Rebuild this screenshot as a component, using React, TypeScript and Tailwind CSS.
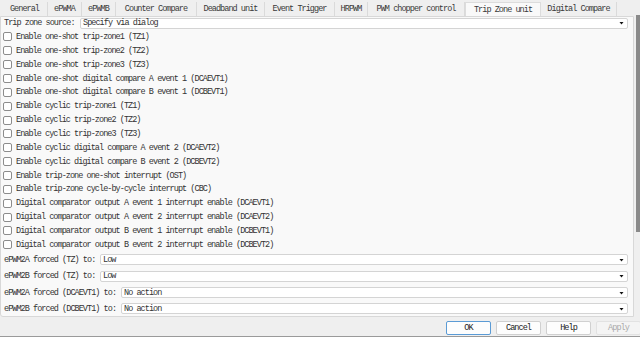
import React from "react";

const tabs: [string, number][] = [
  ["General", 46],
  ["ePWMA", 34],
  ["ePWMB", 34],
  ["Counter Compare", 81],
  ["Deadband unit", 68],
  ["Event Trigger", 70],
  ["HRPWM", 33],
  ["PWM chopper control", 97],
  ["Trip Zone unit", 76],
  ["Digital Compare", 76],
];

const checks = [
  "Enable one-shot trip-zone1 (TZ1)",
  "Enable one-shot trip-zone2 (TZ2)",
  "Enable one-shot trip-zone3 (TZ3)",
  "Enable one-shot digital compare A event 1 (DCAEVT1)",
  "Enable one-shot digital compare B event 1 (DCBEVT1)",
  "Enable cyclic trip-zone1 (TZ1)",
  "Enable cyclic trip-zone2 (TZ2)",
  "Enable cyclic trip-zone3 (TZ3)",
  "Enable cyclic digital compare A event 2 (DCAEVT2)",
  "Enable cyclic digital compare B event 2 (DCBEVT2)",
  "Enable trip-zone one-shot interrupt (OST)",
  "Enable trip-zone cycle-by-cycle interrupt (CBC)",
  "Digital comparator output A event 1 interrupt enable (DCAEVT1)",
  "Digital comparator output A event 2 interrupt enable (DCAEVT2)",
  "Digital comparator output B event 1 interrupt enable (DCBEVT1)",
  "Digital comparator output B event 2 interrupt enable (DCBEVT2)",
];

const selects: [string, string, number][] = [
  ["ePWM2A forced (TZ) to:", "Low", 100],
  ["ePWM2B forced (TZ) to:", "Low", 100],
  ["ePWM2A forced (DCAEVT1) to:", "No action", 121],
  ["ePWM2B forced (DCBEVT1) to:", "No action", 121],
];

function Arrow() {
  return (
    <svg width="5" height="4" viewBox="0 0 5 4" className="shrink-0">
      <path d="M0.5 1 L4.5 1 L2.5 3.5 Z" fill="#111" />
    </svg>
  );
}

function Select({ value, left }: { value: string; left: number }) {
  return (
    <div
      className="absolute right-[5px] h-[11px] bg-white border border-[#d4d4d4] rounded-[2px] flex items-center pl-[2px] pr-[3px]"
      style={{ left }}
    >
      <span className="flex-1 text-[#333]">{value}</span>
      <Arrow />
    </div>
  );
}

export default function App() {
  return (
    <div
      className="w-[640px] h-[337px] bg-[#efefef] relative overflow-hidden text-[8.5px] leading-[10px] tracking-[-0.95px] text-[#333]"
      style={{ fontFamily: '"Liberation Mono", "Noto Sans CJK SC", monospace' }}
    >
      {/* tab bar */}
      <div className="flex h-[16px] pt-[2px] pl-[2px]">
        {tabs.map(([t, w]) => {
          const sel = t === "Trip Zone unit";
          return (
            <div
              key={t}
              className={
                "h-full flex items-center justify-center border-r border-[#dadada] text-[#3a3a3a] " +
                (sel ? "bg-[#f9f9f9] border-l border-t border-[#dcdcdc]" : "")
              }
              style={{ width: w }}
            >
              {t}
            </div>
          );
        })}
      </div>

      {/* panel */}
      <div className="absolute left-0 top-[16px] w-[634px] h-[301px] bg-[#f9f9f9] border border-[#d8d8d8] rounded-bl-[3px]">
        <div className="relative h-[12px] flex items-center">
          <span className="pl-[3px]">Trip zone source:</span>
          <Select value="Specify via dialog" left={79} />
        </div>
        <div className="mt-[1px]">
          {checks.map((c) => (
            <div key={c} className="h-[13.87px] flex items-center pl-[2px]">
              <span className="w-[9px] h-[9px] border border-[#8c8c8c] rounded-[2px] bg-white mr-[4px] shrink-0" />
              <span>{c}</span>
            </div>
          ))}
        </div>
        <div>
          {selects.map(([l, v, left]) => (
            <div key={l} className="relative h-[16.33px] flex items-center">
              <span className="pl-[3px]">{l}</span>
              <Select value={v} left={left - 1} />
            </div>
          ))}
        </div>
      </div>

      {/* scrollbar */}
      <div className="absolute right-0 top-[15px] w-[4px] h-[217px] bg-[#8a8a8a]" />

      {/* buttons */}
      <div className="absolute left-[446px] top-[321px] flex gap-[5px]">
        <button className="w-[45px] h-[14px] bg-[#fdfdfd] border border-[#5b9bd5] rounded-[2px] text-[#222] flex items-center justify-center">
          OK
        </button>
        <button className="w-[45px] h-[14px] bg-[#fdfdfd] border border-[#d0d0d0] rounded-[2px] text-[#222] flex items-center justify-center">
          Cancel
        </button>
        <button className="w-[45px] h-[14px] bg-[#fdfdfd] border border-[#d0d0d0] rounded-[2px] text-[#222] flex items-center justify-center">
          Help
        </button>
        <button className="w-[45px] h-[14px] bg-[#f4f4f4] border border-[#e2e2e2] rounded-[2px] text-[#aaaaaa] flex items-center justify-center">
          Apply
        </button>
      </div>
      <div className="absolute left-0 bottom-0 w-full h-[1px] bg-[#9a9a9a]" />
    </div>
  );
}
